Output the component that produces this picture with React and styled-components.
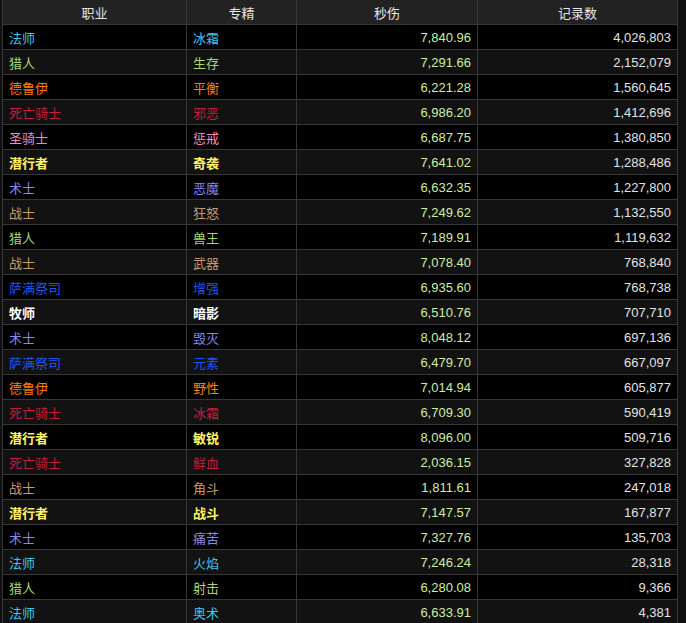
import styled, { createGlobalStyle } from 'styled-components';

const GlobalStyle = createGlobalStyle`
  html, body {
    margin: 0;
    padding: 0;
    background: #111;
  }
  body {
    padding: 0 0 0 2px;
    font-family: "Liberation Sans", Arial, "Noto Sans CJK SC", sans-serif;
  }
`;

const classColors = {
  法师: '#3fc7eb',
  猎人: '#aad372',
  德鲁伊: '#ff7c0a',
  死亡骑士: '#c41e3a',
  圣骑士: '#f48cba',
  潜行者: '#fff468',
  术士: '#8788ee',
  战士: '#c69b6d',
  萨满祭司: '#2156ee',
  牧师: '#ffffff',
};

const boldClasses = ['潜行者', '牧师'];

const rows = [
  ['法师', '冰霜', '7,840.96', '4,026,803'],
  ['猎人', '生存', '7,291.66', '2,152,079'],
  ['德鲁伊', '平衡', '6,221.28', '1,560,645'],
  ['死亡骑士', '邪恶', '6,986.20', '1,412,696'],
  ['圣骑士', '惩戒', '6,687.75', '1,380,850'],
  ['潜行者', '奇袭', '7,641.02', '1,288,486'],
  ['术士', '恶魔', '6,632.35', '1,227,800'],
  ['战士', '狂怒', '7,249.62', '1,132,550'],
  ['猎人', '兽王', '7,189.91', '1,119,632'],
  ['战士', '武器', '7,078.40', '768,840'],
  ['萨满祭司', '增强', '6,935.60', '768,738'],
  ['牧师', '暗影', '6,510.76', '707,710'],
  ['术士', '毁灭', '8,048.12', '697,136'],
  ['萨满祭司', '元素', '6,479.70', '667,097'],
  ['德鲁伊', '野性', '7,014.94', '605,877'],
  ['死亡骑士', '冰霜', '6,709.30', '590,419'],
  ['潜行者', '敏锐', '8,096.00', '509,716'],
  ['死亡骑士', '鲜血', '2,036.15', '327,828'],
  ['战士', '角斗', '1,811.61', '247,018'],
  ['潜行者', '战斗', '7,147.57', '167,877'],
  ['术士', '痛苦', '7,327.76', '135,703'],
  ['法师', '火焰', '7,246.24', '28,318'],
  ['猎人', '射击', '6,280.08', '9,366'],
  ['法师', '奥术', '6,633.91', '4,381'],
];

const Table = styled.table`
  width: 676px;
  border-collapse: collapse;
  table-layout: fixed;
  font-size: 13px;
  border-left: 1px solid #363636;
  border-right: 1px solid #363636;
`;

const HeadCell = styled.th`
  height: 24px;
  padding: 0 6px;
  background: #222;
  color: #e6e6e6;
  font-weight: normal;
  text-align: center;
  border: 1px solid #363636;
  border-top: none;
`;

const Row = styled.tr`
  background: ${(p) => (p.$odd ? '#000' : '#121212')};
`;

const Cell = styled.td`
  height: 24px;
  padding: 0 6px;
  border: 1px solid #363636;
  white-space: nowrap;
  text-align: ${(p) => (p.$right ? 'right' : 'left')};
  color: ${(p) => p.$color};
  font-weight: ${(p) => (p.$bold ? 'bold' : 'normal')};
`;

export default function App() {
  return (
    <>
      <GlobalStyle />
      <Table>
        <colgroup>
          <col style={{ width: 184 }} />
          <col style={{ width: 110 }} />
          <col style={{ width: 181 }} />
          <col style={{ width: 200 }} />
        </colgroup>
        <thead>
          <tr>
            <HeadCell>职业</HeadCell>
            <HeadCell>专精</HeadCell>
            <HeadCell>秒伤</HeadCell>
            <HeadCell>记录数</HeadCell>
          </tr>
        </thead>
        <tbody>
          {rows.map(([cls, spec, dps, count], i) => {
            const color = classColors[cls];
            const bold = boldClasses.includes(cls);
            return (
              <Row key={i} $odd={i % 2 === 0}>
                <Cell $color={color} $bold={bold}>{cls}</Cell>
                <Cell $color={color} $bold={bold}>{spec}</Cell>
                <Cell $right $color="#cdeea0">{dps}</Cell>
                <Cell $right $color="#e2e2e2">{count}</Cell>
              </Row>
            );
          })}
        </tbody>
      </Table>
    </>
  );
}
